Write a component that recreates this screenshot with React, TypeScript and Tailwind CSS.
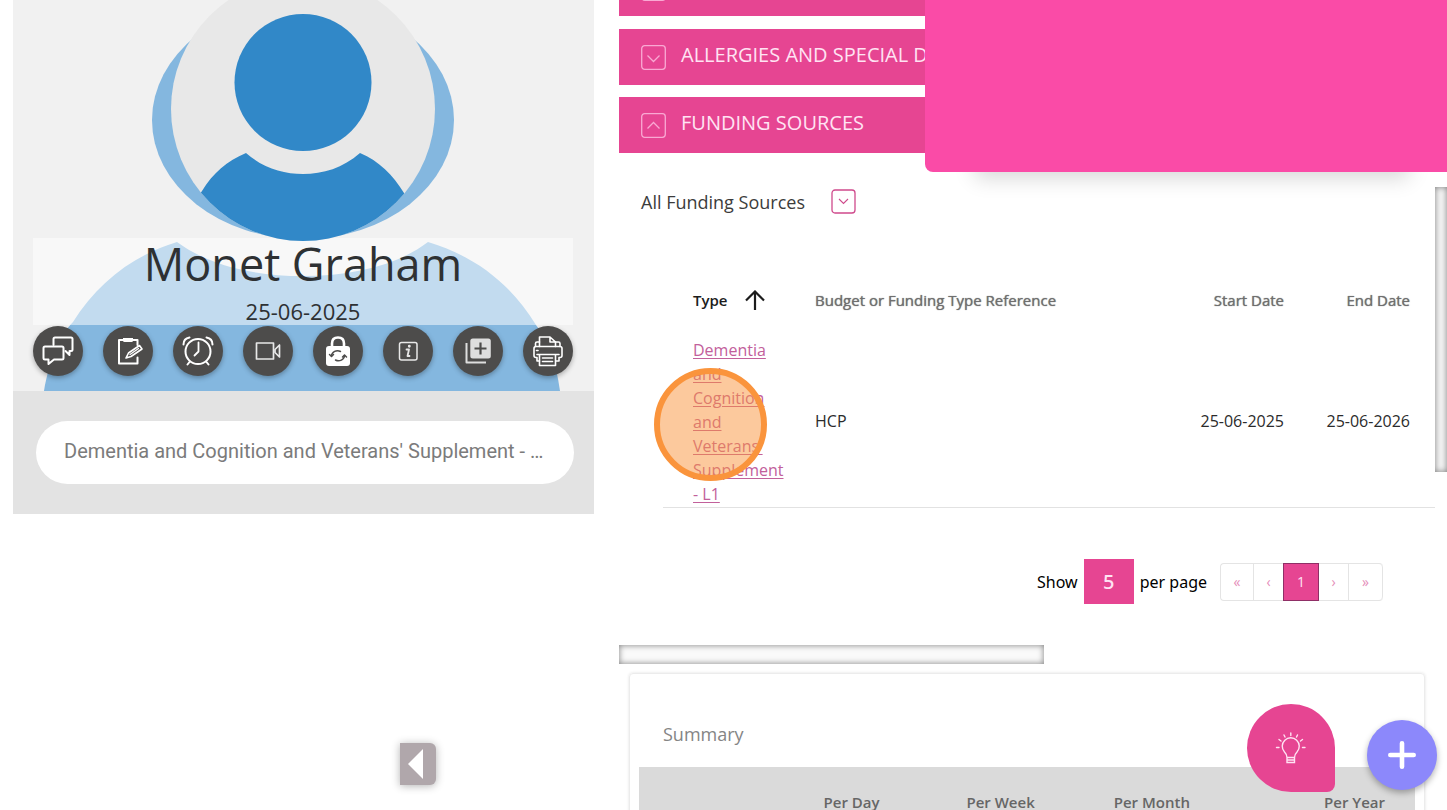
import React from "react";

const iconProps = {
  viewBox: "0 0 50 50",
  fill: "none",
  stroke: "white",
  strokeWidth: 2,
  strokeLinecap: "round" as const,
  strokeLinejoin: "round" as const,
  className: "h-full w-full",
  "aria-hidden": true,
};

const actions: { label: string; icon: React.ReactNode }[] = [
  {
    label: "Messages",
    icon: (
      <svg {...iconProps}>
        <path d="M20.5 19v-6q0-1.500 1.500-1.500h16q1.500 0 1.500 1.500v10.500q0 1.500-1.500 1.500h-1.500v4l-4-4" />
        <path d="M12 20.500h17q1.500 0 1.500 1.500v10q0 1.500-1.500 1.500h-8l-5.500 4.500v-4.500h-3.500q-1.500 0-1.500-1.500v-10q0-1.500 1.500-1.500z" />
      </svg>
    ),
  },
  {
    label: "Notes",
    icon: (
      <svg {...iconProps}>
        <path d="M34.500 19v-5h-18.500v23.500h18.500v-6" strokeWidth="2" />
        <path d="M20 12h10v2.500q0 1.500-1.500 1.500h-7q-1.500 0-1.500-1.500z" fill="white" stroke="none" />
        <path d="M23 32l2.500-5 11-7.500 2.500 3.500-11 7.500z" fill="#4d4c4b" strokeWidth="1.600" />
        <path d="M27 28.500l8.500-6" strokeWidth="1.200" />
      </svg>
    ),
  },
  {
    label: "Reminders",
    icon: (
      <svg {...iconProps}>
        <circle cx="25" cy="25.500" r="12.500" />
        <path d="M25.500 16.500v9l-4 4" strokeWidth="1.800" />
        <path d="M16.500 36l-2 2.500M33.500 36l2 2.500" />
        <path d="M10.500 18.500q0-6 6-7M39.500 18.500q0-6-6-7" />
      </svg>
    ),
  },
  {
    label: "Video call",
    icon: (
      <svg {...iconProps} strokeWidth={1.7} stroke="#e8e8e8">
        <rect x="13.500" y="17" width="17" height="16" />
        <path d="M32 23.500l4.500-4.500v12l-4.500-4.500z" />
      </svg>
    ),
  },
  {
    label: "Reset password",
    icon: (
      <svg {...iconProps}>
        <path d="M19 21v-3.500q0-6 6-6t6 6v3.500" strokeWidth="2.600" />
        <rect x="13" y="20" width="24" height="20" rx="3" fill="white" stroke="none" />
        <g stroke="#4d4c4b" strokeWidth="1.500">
          <path d="M18.500 30a6 5.500 0 0 1 9-4.500M31.500 29.500a6 5.500 0 0 1-9 4.500" />
          <path d="M16.500 28.500l2 2 2-2M29.500 31l2-2 2 2" />
        </g>
      </svg>
    ),
  },
  {
    label: "Information",
    icon: (
      <svg {...iconProps} strokeWidth={1.5} stroke="#e8e8e8">
        <rect x="16.500" y="16.500" width="17.500" height="17.500" rx="2" />
        <path d="M23.500 23.500h2.500l-1.500 6.500h2" strokeWidth="1.800" />
        <circle cx="26.300" cy="20.300" r="0.700" fill="#e8e8e8" />
      </svg>
    ),
  },
  {
    label: "Add to library",
    icon: (
      <svg {...iconProps}>
        <rect x="17.300" y="12.500" width="20.500" height="20" rx="2.500" fill="#dedede" stroke="none" />
        <path d="M27.500 16.500v12M21.500 22.500h12" stroke="#4d4c4b" strokeWidth="2.200" strokeLinecap="butt" />
        <path d="M13.500 17v19.500h19.500" stroke="#dedede" strokeWidth="2" strokeLinecap="butt" />
      </svg>
    ),
  },
  {
    label: "Print",
    icon: (
      <svg {...iconProps} strokeWidth={1.6}>
        <path d="M16.500 20.500v-9.500h10.500l5.500 5v4.500M27 11v5h5.500" />
        <path d="M16.500 16h-2.500q-1.500 0-1.500 1.500v3M32.500 16h3q1.500 0 1.500 1.500v3" />
        <path d="M16.500 35h-2.500v-3.500h-1q-2 0-2-2v-7q0-2 2-2h24q2 0 2 2v7q0 2-2 2h-1v3.500h-3" />
        <path d="M14 28.500h22M16.500 28.500v11h16v-11M19.500 32h10M19.500 35.500h10" />
        <path d="M13.500 24.500h1.500" />
      </svg>
    ),
  },
];

function Chevron({ up = false }: { up?: boolean }) {
  return (
    <svg viewBox="0 0 25 25" fill="none" stroke="currentColor" className="h-[25px] w-[25px] shrink-0 text-[#f9a9d3]" aria-hidden="true">
      <rect x="0.700" y="0.700" width="23.600" height="23.600" rx="3" strokeWidth="1.300" />
      <path d={up ? "M6.500 15.500l6-6 6 6" : "M6.500 10.500l6 6 6-6"} strokeWidth="1.300" />
    </svg>
  );
}

function Bar({ title, up }: { title: string; up?: boolean }) {
  return (
    <button className="flex h-14 w-full items-center gap-[15px] bg-[#e64592] px-[22px] text-left text-xl whitespace-nowrap text-[#ffe3f3]">
      <Chevron up={up} />
      <span className="pb-1">{title}</span>
    </button>
  );
}

function ProfilePicture() {
  return (
    <svg
      viewBox="0 0 581 391"
      preserveAspectRatio="xMidYMax slice"
      className="absolute inset-0 h-full w-full"
      aria-hidden="true"
    >
      <rect width="581" height="391" fill="#f1f1f1" />
      <ellipse cx="290" cy="120" rx="151" ry="119" fill="#84b7df" />
      <path
        d="M31 391C36 362 46 336 60 322C84 284 118 256 164 242C195 265 240 276 290 276C340 276 385 265 415 242C462 256 498 284 523 325C536 342 543 362 547 391Z"
        fill="#84b7df"
      />
    </svg>
  );
}

function Avatar() {
  return (
    <svg
      viewBox="0 0 264 264"
      className="absolute -top-[23px] left-1/2 -ml-[133px] h-[264px] w-[264px]"
      role="img"
      aria-label="Profile"
    >
      <clipPath id="disc">
        <circle cx="132" cy="132" r="132" />
      </clipPath>
      <g clipPath="url(#disc)">
        <rect width="264" height="264" fill="#e8e8e8" />
        <circle cx="132" cy="105.500" r="68.500" fill="#3188c8" />
        <path
          d="M14 264C16 240 22 226 31 214C42 196 56 184 75 176C92 191 112 197 132 197C152 197 172 191 189 176C208 184 222 198 233 216C242 230 248 246 250 264Z"
          fill="#3188c8"
        />
      </g>
    </svg>
  );
}

const pageCell = "flex h-full items-center justify-center border-r border-[#e4e4e4] text-[#e58db9]";
const heading = "font-normal [text-shadow:0_0_1px_currentColor]";

export default function App() {
  return (
    <div className="relative grid h-screen grid-cols-[581fr_828fr] gap-[25px] overflow-hidden bg-white pl-[13px] font-['Open_Sans',sans-serif] text-[#2b2b2b]">
      <aside>
        <div className="relative flex h-[391px] flex-col justify-end overflow-hidden pr-[21px] pb-[15px] pl-5">
          <ProfilePicture />
          <div className="relative h-[87px] bg-white/50" />
          <Avatar />
          <div className="relative -mt-[87px] mb-px flex h-[87px] flex-col items-center text-[#2e3133]">
            <h1 className="text-[45px] leading-[52px]">Monet Graham</h1>
            <p className="text-[22px] leading-[42px]">25-06-2025</p>
          </div>
          <div className="relative flex justify-between">
            {actions.map((a) => (
              <button
                key={a.label}
                aria-label={a.label}
                className="h-[50px] w-[50px] rounded-full bg-[#4d4c4b] shadow-[0_2px_5px_rgba(0,0,0,0.3)]"
              >
                {a.icon}
              </button>
            ))}
          </div>
        </div>
        <div className="bg-[#e3e3e3] pt-[30px] pr-5 pb-[30px] pl-[23px]">
          <button className="block h-[63px] w-full truncate rounded-full bg-white px-7 pb-1 text-left font-['Roboto',sans-serif] text-xl text-[#7b7b7b]">
            Dementia and Cognition and Veterans' Supplement - …
          </button>
        </div>
      </aside>

      <main className="min-w-0">
        <div className="flex flex-col gap-3">
          <button aria-label="Previous section" className="mb-px flex h-4 items-start overflow-hidden bg-[#e64592] px-[22px]">
            <span className="-mt-6">
              <Chevron />
            </span>
          </button>
          <Bar title="ALLERGIES AND SPECIAL DIETS" />
          <Bar title="FUNDING SOURCES" up />
        </div>

        <section className="relative pt-px">
          <div className="flex items-center gap-[26px] pt-[34px] pl-[22px]">
            <h2 className="text-lg leading-7 text-[#3c3c3c]">All Funding Sources</h2>
            <button aria-label="Choose funding sources" className="mb-0.5 text-[#cf4a8c]">
              <svg viewBox="0 0 25 25" fill="none" stroke="currentColor" className="h-[25px] w-[25px]" aria-hidden="true">
                <rect x="1" y="1" width="23" height="23" rx="3" strokeWidth="1.300" />
                <path d="M8 10l4.500 4.500 4.500-4.500" strokeWidth="1.100" />
              </svg>
            </button>
          </div>

          <div className="pt-[49px] pr-3 pl-11">
            <table className="w-full table-fixed border-collapse border-b border-[#e2e2e2]">
              <thead>
                <tr className="h-[70px] text-[15px] text-[#6f6f6f]">
                  <th className={"w-[152px] pl-[30px] text-left text-[#1c1c1c] " + heading}>
                    <button className="flex items-center gap-[18px] font-semibold">
                      Type
                      <svg viewBox="0 0 20 20" fill="none" stroke="currentColor" strokeWidth="2.200" className="h-5 w-5" aria-hidden="true">
                        <path d="M10 20V1.500M1 10.500l9-9 9 9" />
                      </svg>
                    </button>
                  </th>
                  <th className={"text-left " + heading}>Budget or Funding Type Reference</th>
                  <th className={"w-[120px] text-right " + heading}>Start Date</th>
                  <th className={"w-[151px] pr-[25px] text-right " + heading}>End Date</th>
                </tr>
              </thead>
              <tbody>
                <tr className="leading-6">
                  <td className="pt-[3px] pr-7 pb-px pl-[30px]">
                    <a href="#funding" className="text-[#c2609b] underline underline-offset-2">
                      Dementia and Cognition and Veterans' Supplement - L1
                    </a>
                  </td>
                  <td>HCP</td>
                  <td className="text-right">25-06-2025</td>
                  <td className="pr-[25px] text-right">25-06-2026</td>
                </tr>
              </tbody>
            </table>
          </div>

          <div className="flex items-center justify-end pt-[51px] pr-16">
            <label className="flex items-center gap-1.5 font-['Trebuchet_MS','Noto_Sans',sans-serif] text-black">
              Show
              <select className="h-[45px] w-[50px] appearance-none bg-[#e64592] text-center text-xl font-medium text-[#ffe3f3] [text-align-last:center]">
                <option>5</option>
              </select>
              per page
            </label>
            <nav aria-label="Pages" className="ml-[13px] flex h-[38px] rounded border border-r-0 border-[#e4e4e4] text-sm">
              <a href="#first" className={pageCell + " w-[33px]"}>«</a>
              <a href="#prev" className={pageCell + " w-[29px] border-r-0"}>‹</a>
              <a href="#1" aria-current="page" className="-my-px flex w-9 items-center justify-center border border-[#8f2f66] bg-[#e64592] text-[#ffe3f3]">1</a>
              <a href="#next" className={pageCell + " w-[30px]"}>›</a>
              <a href="#last" className={pageCell + " w-[34px] rounded-r"}>»</a>
            </nav>
          </div>

          <div className="absolute top-[34px] right-0 h-[285px] w-3 bg-[#f5f5f5] shadow-[inset_0_0_6px_rgba(0,0,0,0.5)]" />
          <div className="mt-[41px] h-[19px] w-[425px] bg-[#fafafa] shadow-[inset_0_0_6px_rgba(0,0,0,0.5)]" />
        </section>

        <section className="mt-[9px] mr-[22px] ml-2.5 h-60 rounded border border-[#ececec] px-[9px] pt-[46px] shadow-[0_0_3px_rgba(0,0,0,0.12)]">
          <h2 className="pl-6 text-lg leading-7 text-[#858585]">Summary</h2>
          <table className="mt-[19px] w-full table-fixed bg-[#dadada] text-[15px] text-[#666]">
            <thead>
              <tr className="h-[70px] text-right">
                <th className="w-[31%] font-semibold">Per Day</th>
                <th className="w-[20%] font-semibold">Per Week</th>
                <th className="w-[20%] font-semibold">Per Month</th>
                <th className="pr-[30px] font-semibold">Per Year</th>
              </tr>
            </thead>
          </table>
        </section>
      </main>

      <div className="absolute top-0 right-0 h-[172px] w-[522px] rounded-bl-lg bg-[#fa4ba7] shadow-[6px_50px_20px_-44px_rgba(0,0,0,0.16)]" />
      <div className="absolute top-[368px] left-[654px] h-[113px] w-[113px] rounded-full border-6 border-[#fa943c] bg-[#fa943c]/50" />
      <button
        aria-label="Collapse panel"
        className="absolute top-[743px] left-[400px] h-[42px] w-9 rounded-r-md bg-[#b0a7ab] shadow-[0_1px_8px_rgba(0,0,0,0.3)]"
      >
        <svg viewBox="0 0 36 42" className="h-full w-full" aria-hidden="true">
          <path d="M8 21L23 6v30z" fill="white" />
        </svg>
      </button>
      <button
        aria-label="Ideas"
        className="absolute right-28 bottom-[18px] flex h-[88px] w-[88px] items-center justify-center rounded-t-[44px] rounded-br-lg rounded-bl-[44px] bg-[#e64592]"
      >
        <svg viewBox="0 0 32 34" fill="none" stroke="#ffe3f3" strokeWidth="1.400" strokeLinecap="round" className="h-[34px] w-8" aria-hidden="true">
          <path d="M12 26.500q0-3-2.500-5.500a8.500 8.500 0 1 1 12.500 0q-2.500 2.500-2.500 5.500zM12 26.500v5h7.500v-5M12 29h7.500" />
          <path d="M15.800 2v2.500M9 4l1 2M22.500 4l-1 2M4 8.500l2 1.500M27.500 8.500l-2 1.500M1.500 16.500h2.500M27.500 16.500h2.500" />
        </svg>
      </button>
      <button
        aria-label="Add"
        className="absolute right-2.5 bottom-5 flex h-[70px] w-[70px] items-center justify-center rounded-full bg-[#8c88fb] shadow-[0_3px_6px_rgba(0,0,0,0.3)]"
      >
        <svg viewBox="0 0 28 28" stroke="white" strokeWidth="4.600" strokeLinecap="round" className="h-7 w-7" aria-hidden="true">
          <path d="M14 2.300v23.400M2.300 14h23.400" />
        </svg>
      </button>
    </div>
  );
}
